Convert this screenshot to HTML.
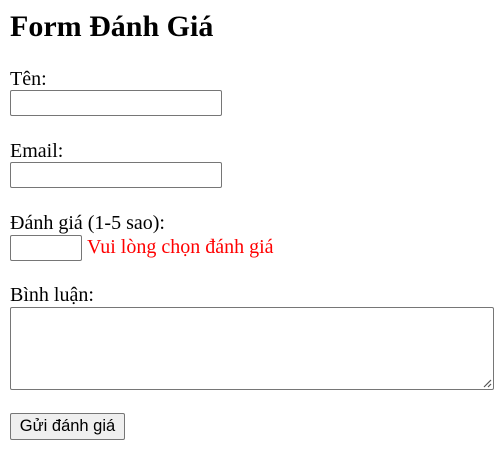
<!DOCTYPE html>
<html><head><meta charset="utf-8"><style>
body{margin:0;width:500px;height:454px;background:#fff;font-family:"Liberation Serif",serif;color:#000;position:relative;overflow:hidden}
.a{position:absolute;white-space:nowrap}
.t{font-size:20px;line-height:23px}
.in{position:absolute;box-sizing:border-box;border:1px solid #767676;border-radius:2px;background:#fff}
</style></head><body>
<div class="a" style="left:10px;top:10px;font-size:30px;line-height:34px;font-weight:bold">Form Đánh Giá</div>
<div class="a t" style="left:10px;top:68px">Tên:</div>
<div class="in" style="left:10px;top:90px;width:212px;height:26px"></div>
<div class="a t" style="left:10px;top:140px">Email:</div>
<div class="in" style="left:10px;top:162px;width:212px;height:26px"></div>
<div class="a t" style="left:10px;top:212px">Đánh giá (1-5 sao):</div>
<div class="in" style="left:10px;top:235px;width:72px;height:26px"></div>
<div class="a t" style="left:87px;top:236px;color:#f00">Vui lòng chọn đánh giá</div>
<div class="a t" style="left:10px;top:284px">Bình luận:</div>
<div class="in" style="left:10px;top:307px;width:484px;height:83px">
<svg style="position:absolute;right:1px;bottom:1px" width="10" height="10"><path d="M2 9L9 2M6 9L9 6" stroke="#555" stroke-width="1.2"/></svg></div>
<div class="a" style="left:10px;top:413px;width:115px;height:27px;box-sizing:border-box;border:1px solid #767676;border-radius:2px;background:#efefef;font-family:'Liberation Sans',sans-serif;font-size:16.5px;line-height:25px;text-align:center">Gửi đánh giá</div>
</body></html>
